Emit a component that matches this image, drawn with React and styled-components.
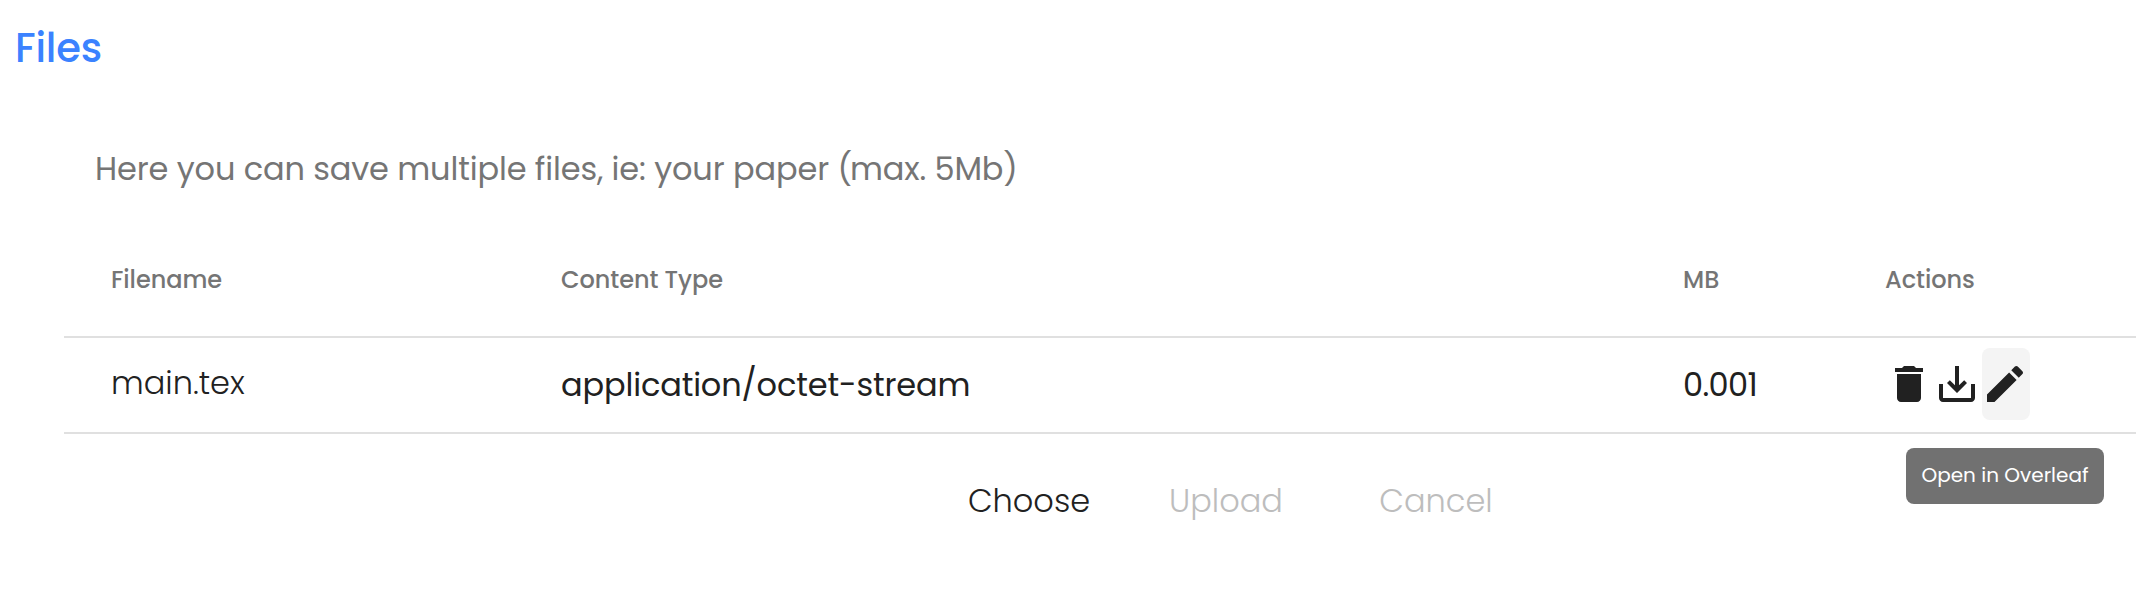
import React, { useState } from "react";
import styled, { createGlobalStyle } from "styled-components";

const files = [
  { name: "main.tex", contentType: "application/octet-stream", size: "0.001" },
];

const GlobalStyle = createGlobalStyle`
  body {
    margin: 0;
    background: #fff;
    overflow: hidden;
  }

  * {
    box-sizing: border-box;
  }
`;

const Page = styled.main`
  height: 612px;
  padding-top: 25px;
  overflow: hidden;
  color: #212121;
  font-family: Poppins, Inter, "Open Sans", sans-serif;
  white-space: nowrap;
`;

const Title = styled.h2`
  margin: 0;
  padding-left: 15px;
  color: #3b82ff;
  font-size: 40px;
  font-weight: 500;
  line-height: 47px;
  letter-spacing: -0.15px;
`;

const Description = styled.p`
  margin: 73px 0 31px;
  padding-left: 95px;
  color: #757575;
  font-size: 32px;
  line-height: 48px;
  letter-spacing: -0.13px;
`;

const Paren = styled.span`
  letter-spacing: -2px;
`;

const Row = styled.div`
  display: grid;
  grid-template-columns: 450px 1122px 202px 1fr;
  align-items: center;
  height: ${({ $head }) => ($head ? 114 : 96)}px;
  margin-left: 64px;
  padding-left: 47px;
  border-bottom: 2px solid #e0e0e0;
`;

const HeadCell = styled.div`
  color: #757575;
  font-size: 24px;
  font-weight: 500;
  line-height: 32px;
  letter-spacing: -0.04px;
`;

const Cell = styled.div`
  padding-bottom: ${({ $light }) => ($light ? 4 : 0)}px;
  font-size: 32px;
  font-weight: ${({ $light }) => ($light ? 300 : 400)};
  line-height: 48px;
  letter-spacing: ${({ $spacing }) => $spacing || 0}px;
`;

const Actions = styled.div`
  display: flex;
  padding: 0 0 2px 1px;
`;

const IconButton = styled.button`
  position: relative;
  display: flex;
  align-items: center;
  width: 48px;
  height: 72px;
  padding: 0;
  border: 0;
  border-radius: 8px;
  background: ${({ $active }) => ($active ? "#f4f4f4" : "transparent")};
  color: inherit;
  font: inherit;

  svg {
    flex: none;
    width: 48px;
    height: 48px;
    margin-left: -1px;
    fill: currentColor;
  }
`;

const Tooltip = styled.span`
  position: absolute;
  top: 100px;
  left: -76px;
  width: 198px;
  height: 56px;
  border-radius: 8px;
  background: #717171;
  color: #fff;
  font-size: 20px;
  line-height: 54px;
  text-align: center;
`;

const Footer = styled.div`
  display: flex;
  margin: 43px 0 0 937px;
`;

const TextButton = styled.button`
  width: ${({ $width }) => $width}px;
  padding: 0;
  border: 0;
  background: transparent;
  color: inherit;
  font: inherit;
  font-size: 32px;
  font-weight: 300;
  line-height: 48px;

  &:disabled {
    color: #bdbdbd;
  }
`;

const DeleteIcon = () => (
  <svg viewBox="0 0 24 24">
    <path d="M6 19c0 1.1.9 2 2 2h8c1.1 0 2-.9 2-2V7H6v12zM19 4h-3.5l-1-1h-5l-1 1H5v2h14V4z" />
  </svg>
);

const DownloadIcon = () => (
  <svg viewBox="0 0 24 24">
    <path d="M19 12v7H5v-7H3v7c0 1.1.9 2 2 2h14c1.1 0 2-.9 2-2v-7h-2zm-6 .67l2.59-2.58L17 11.5l-5 5-5-5 1.41-1.41L11 12.67V3h2z" />
  </svg>
);

const EditIcon = () => (
  <svg viewBox="0 0 24 24">
    <path d="M3 17.25V21h3.75L17.81 9.94l-3.75-3.75L3 17.25zM20.71 7.04c.39-.39.39-1.02 0-1.41l-2.34-2.34c-.39-.39-1.02-.39-1.41 0l-1.83 1.83 3.75 3.75 1.83-1.83z" />
  </svg>
);

const App = () => {
  const [selected, setSelected] = useState(false);

  return (
    <Page>
      <GlobalStyle />
      <Title>Files</Title>
      <Description>
        Here you can save multiple files, ie: your paper <Paren>(</Paren>max.
        5Mb)
      </Description>
      <Row $head>
        <HeadCell>Filename</HeadCell>
        <HeadCell>Content Type</HeadCell>
        <HeadCell>MB</HeadCell>
        <HeadCell>Actions</HeadCell>
      </Row>
      {files.map((file) => (
        <Row key={file.name}>
          <Cell $light>{file.name}</Cell>
          <Cell $spacing={-0.15}>{file.contentType}</Cell>
          <Cell $spacing={-0.6}>{file.size}</Cell>
          <Actions>
            <IconButton>
              <DeleteIcon />
            </IconButton>
            <IconButton>
              <DownloadIcon />
            </IconButton>
            <IconButton $active>
              <EditIcon />
              <Tooltip>Open in Overleaf</Tooltip>
            </IconButton>
          </Actions>
        </Row>
      ))}
      <Footer>
        <TextButton $width={184} onClick={() => setSelected(true)}>
          Choose
        </TextButton>
        <TextButton $width={210} disabled={!selected}>
          Upload
        </TextButton>
        <TextButton $width={210} disabled={!selected}>
          Cancel
        </TextButton>
      </Footer>
    </Page>
  );
};

export default App;
